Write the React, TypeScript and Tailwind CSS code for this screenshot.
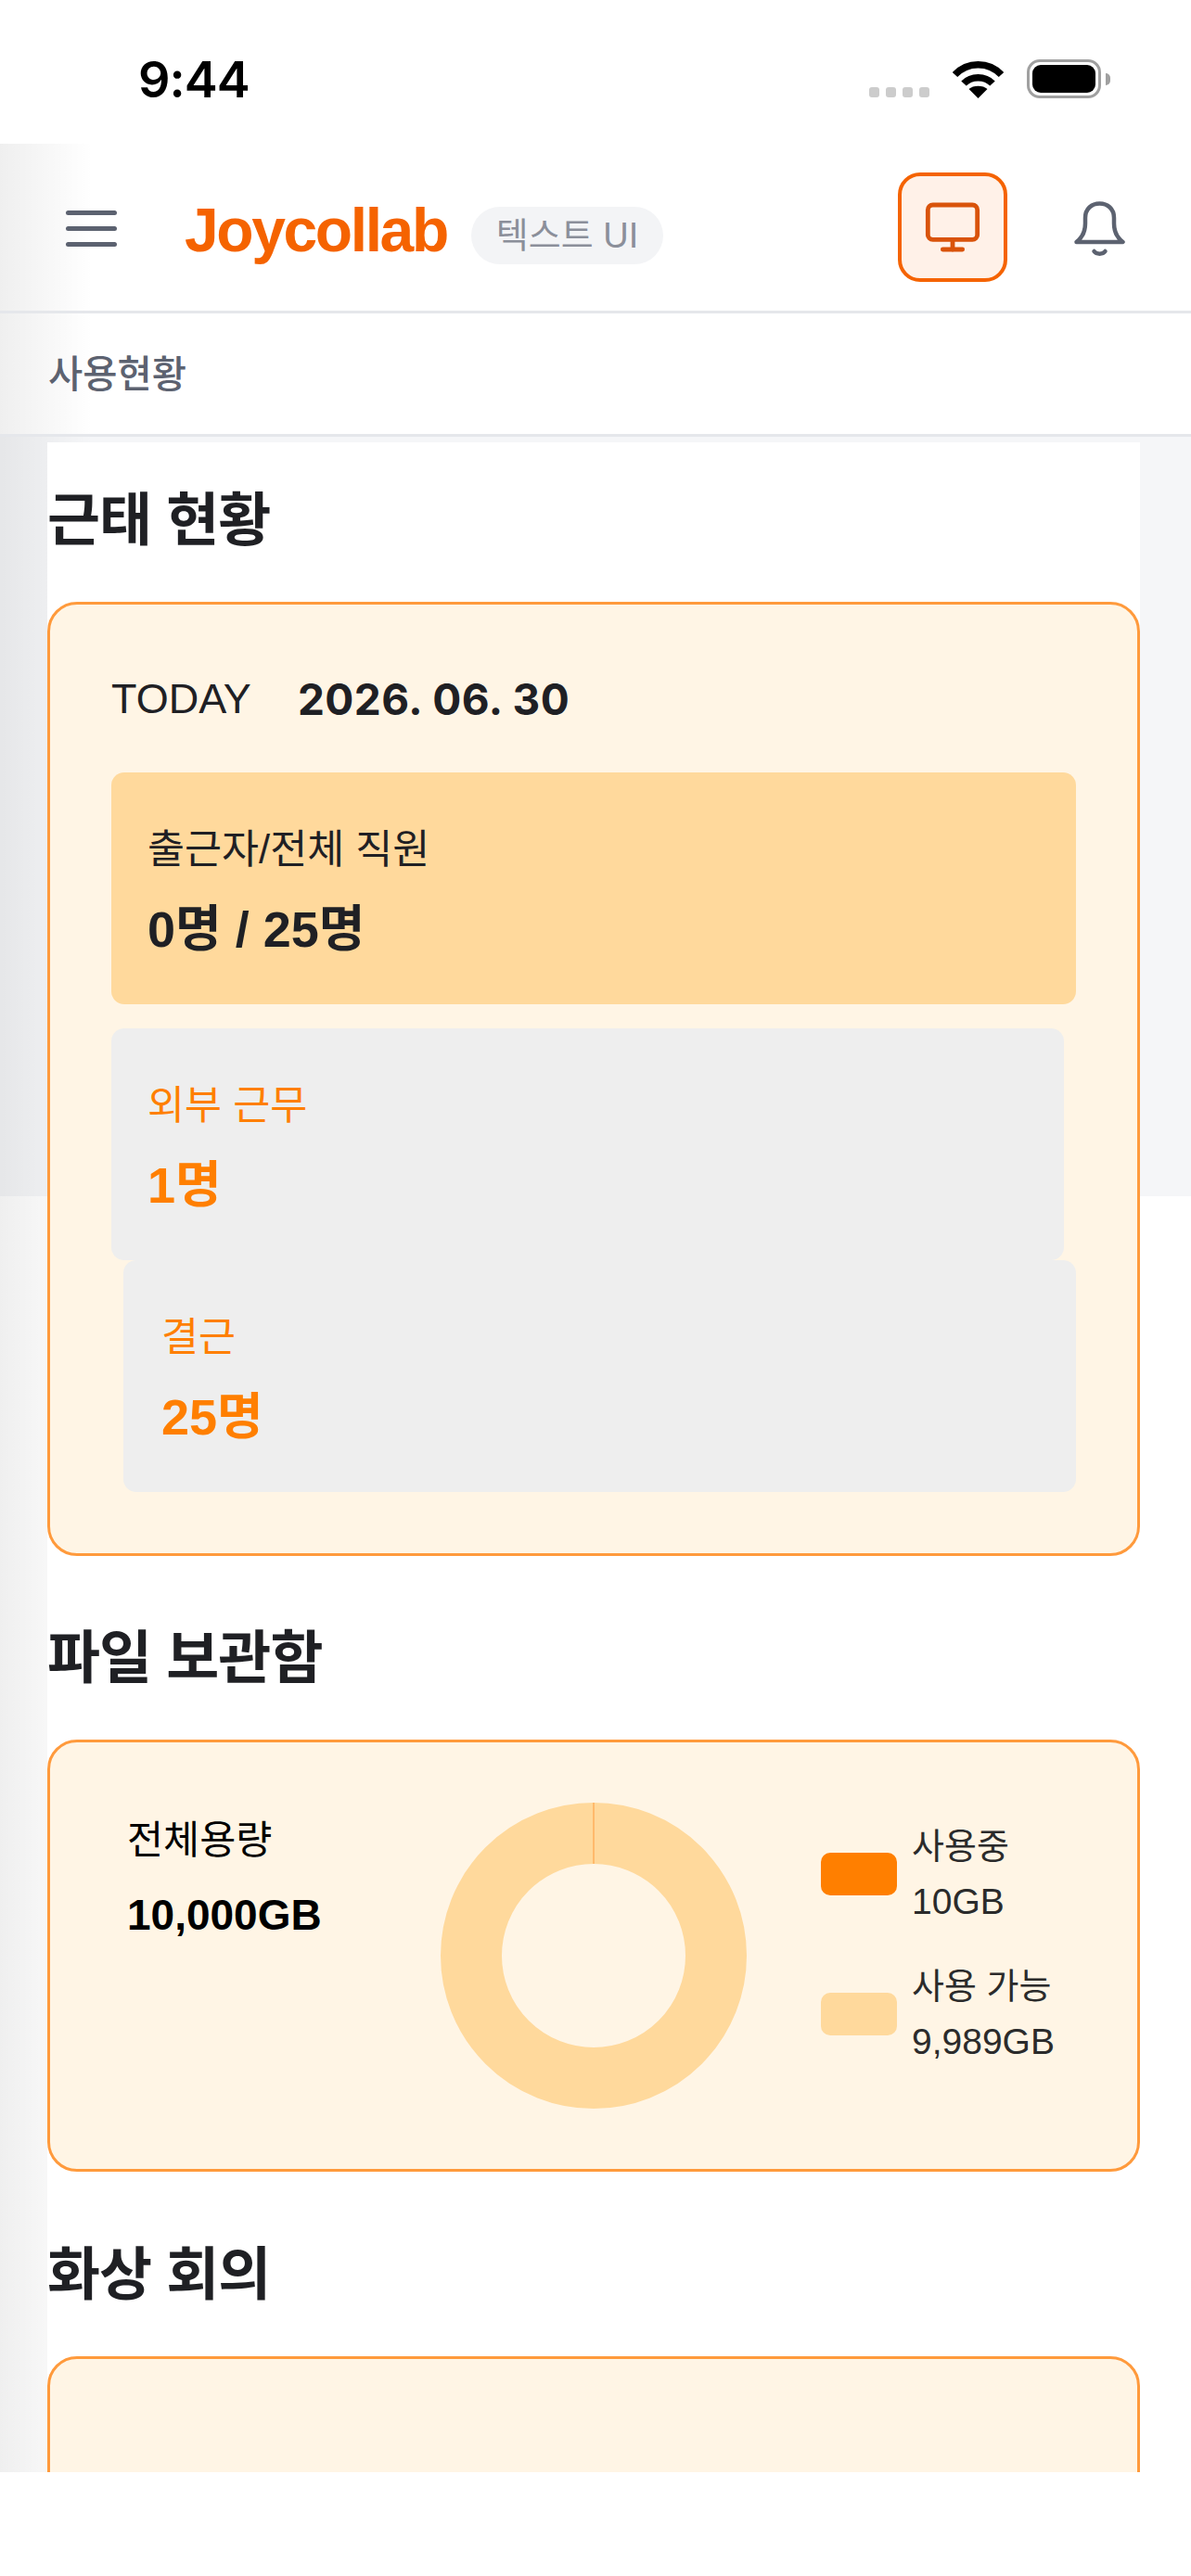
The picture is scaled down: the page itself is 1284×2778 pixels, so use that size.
import { Monitor } from "lucide-react"

const Wifi = () => (
  <svg width="55" height="41" viewBox="0 0 55 41" fill="none" stroke="#000" strokeWidth="7.5">
    <path d="M2.5 15.5 C16 1 39 1 52.5 15.5" />
    <path d="M12 25 C20 16.5 35 16.5 43 25" />
    <path d="M27.5 41 L17.5 31 C22 26.5 33 26.5 37.5 31 Z" fill="#000" stroke="none" />
  </svg>
)

const Battery = () => (
  <div className="flex items-center gap-[5px]">
    <div className="w-[80px] h-[42px] rounded-[14px] border-[3px] border-[#a0a0a0] p-[3px]">
      <div className="w-full h-full rounded-[9px] bg-black"></div>
    </div>
    <div className="w-[5px] h-[13px] rounded-r-full bg-[#a0a0a0]"></div>
  </div>
)

const Bell = () => (
  <svg width="55" height="60" viewBox="0 0 55 60" fill="none" stroke="#5c6270" strokeWidth="4.5" strokeLinecap="round" strokeLinejoin="round">
    <path d="M2.5 44 C9 39 12 33 12 24 L12 18 C12 8 19 2.5 27.5 2.5 C36 2.5 43 8 43 18 L43 24 C43 33 46 39 52.5 44 Z" />
    <path d="M21.5 54 C24 57.5 31 57.5 33.5 54" />
  </svg>
)

const Heading: React.FC<{ title: string }> = ({ title }) => (
  <h2 className="h-[80px] mb-[51px] text-[62px] leading-[88px] font-semibold tracking-[-1px] text-[#1f2024]">
    {title}
  </h2>
)

const Tile: React.FC<{ label: string; value: string; className: string; tone: string }> = ({
  label,
  value,
  className,
  tone,
}) => (
  <div className={`h-[250px] rounded-[14px] pt-[51px] ${className}`}>
    <div className={`h-[60px] text-[43.5px] leading-[65px] ${tone}`}>{label}</div>
    <div className={`h-[64px] mt-[26px] text-[54px] leading-[64px] font-bold ${tone}`}>{value}</div>
  </div>
)

const LegendRow: React.FC<{ swatch: string; label: string; value: string }> = ({ swatch, label, value }) => (
  <div className="flex items-center gap-4">
    <div className={`w-[82px] h-[46px] rounded-[10px] ${swatch}`}></div>
    <div className="text-[38px] leading-[60px] text-[#2b2b2b]">
      <div>{label}</div>
      <div className="text-[39px]">{value}</div>
    </div>
  </div>
)

export default function App() {
  return (
    <div className="w-[1284px] h-[2778px] bg-white overflow-hidden font-['Liberation_Sans','Noto_Sans_CJK_KR',sans-serif]">
      {/* status bar */}
      <div className="h-[155px] pl-[149px] pr-[87px] pt-[64px] flex items-start justify-between">
        <span className="text-[54px] leading-[44px] font-semibold tracking-[-1px] text-black font-['Inter','Liberation_Sans',sans-serif]">9:44</span>
        <div className="flex items-end gap-[25px]">
          <div className="flex gap-[7px] pb-[1px]">
            <div className="w-[11px] h-[11px] rounded-[3px] bg-[#cccccc]"></div>
            <div className="w-[11px] h-[11px] rounded-[3px] bg-[#cccccc]"></div>
            <div className="w-[11px] h-[11px] rounded-[3px] bg-[#cccccc]"></div>
            <div className="w-[11px] h-[11px] rounded-[3px] bg-[#cccccc]"></div>
          </div>
          <Wifi />
          <Battery />
        </div>
      </div>

      <div className="relative h-[2511px] overflow-hidden">
        {/* grey band behind the panel, then the drawer shadow */}
        <div className="absolute top-[316px] left-0 right-0 h-[819px] bg-[#f5f6f8]"></div>
        <div className="absolute top-0 bottom-0 left-0 w-[100px] bg-gradient-to-r from-[#00000010] to-[#00000000]"></div>

        {/* header */}
        <div className="relative h-[183px] border-b-[3px] border-[#e5e7eb] flex items-center pl-[71px] pr-[71px]">
          <div className="flex flex-col gap-[12px] w-[55px] mt-[2px]">
            <div className="h-[5px] rounded-full bg-[#5c6270]"></div>
            <div className="h-[5px] rounded-full bg-[#5c6270]"></div>
            <div className="h-[5px] rounded-full bg-[#5c6270]"></div>
          </div>
          <span className="ml-[73px] mt-[6px] text-[66px] leading-none font-bold tracking-[-2.4px] text-[#f56300]">Joycollab</span>
          <span className="ml-[26px] mt-[18px] h-[62px] px-[27px] rounded-full bg-[#f3f4f6] text-[38px] leading-[62px] text-[#8b8f9a]">
            텍스트 UI
          </span>
          <button className="ml-auto w-[118px] h-[118px] rounded-[24px] border-[4px] border-[#f56300] bg-[#fff1e8] flex items-center justify-center">
            <Monitor size={64} strokeWidth={1.8} color="#d9530a" />
          </button>
          <div className="ml-[72px] mt-[3px]">
            <Bell />
          </div>
        </div>

        {/* breadcrumb */}
        <div className="relative h-[133px] border-b-[3px] border-[#e5e7eb] flex items-center pl-[52px] pt-[3px] text-[40.5px] font-medium text-[#5c6270]">
          사용현황
        </div>

        {/* content */}
        <div className="pt-[6px]">
          <div className="relative ml-[51px] mr-[55px] bg-white pt-[41px]">
            <Heading title="근태 현황" />
            <div className="h-[1029px] rounded-[32px] border-[3px] border-[#ff9a3c] bg-[#fff5e5] px-[66px] flex flex-col">
              <div className="h-[181px] flex items-start pt-[72px] text-[#1f2024]">
                <span className="text-[45px] leading-[60px]">TODAY</span>
                <span className="ml-[50px] text-[46px] leading-[60px] font-bold tracking-[0.5px] font-['Inter','Liberation_Sans',sans-serif]">2026. 06. 30</span>
              </div>
              <Tile label="출근자/전체 직원" value="0명 / 25명" tone="text-[#1f2024]" className="bg-[#ffd99c] pl-[39px]" />
              <Tile label="외부 근무" value="1명" tone="text-[#ff7f00]" className="mt-[26px] w-[1027px] self-start bg-[#eeeeee] pl-[39px]" />
              <Tile label="결근" value="25명" tone="text-[#ff7f00]" className="w-[1027px] self-end bg-[#eeeeee] pl-[41px]" />
            </div>

            <div className="mt-[67px]">
              <Heading title="파일 보관함" />
            </div>
            <div className="h-[466px] rounded-[32px] border-[3px] border-[#ff9a3c] bg-[#fff5e5] pl-[83px] flex items-start">
              <div className="w-[338px] pt-[76px] text-black">
                <div className="h-[60px] text-[42.5px] leading-[60px]">전체용량</div>
                <div className="h-[60px] mt-[20px] text-[46px] leading-[60px] font-bold">10,000GB</div>
              </div>
              <svg width="330" height="330" viewBox="0 0 330 330" className="mt-[65px] shrink-0">
                <circle cx="165" cy="165" r="132" fill="none" stroke="#ffd99c" strokeWidth="66" />
                <line x1="165" y1="0" x2="165" y2="66" stroke="#ff9a3c" strokeWidth="1" />
              </svg>
              <div className="ml-[80px] pt-[82px] flex flex-col gap-[31px]">
                <LegendRow swatch="bg-[#ff7f00]" label="사용중" value="10GB" />
                <LegendRow swatch="bg-[#ffd99c]" label="사용 가능" value="9,989GB" />
              </div>
            </div>

            <div className="mt-[68px]">
              <Heading title="화상 회의" />
            </div>
            <div className="h-[400px] rounded-[32px] border-[3px] border-[#ff9a3c] bg-[#fff5e5]"></div>
          </div>
        </div>
      </div>
    </div>
  )
}
